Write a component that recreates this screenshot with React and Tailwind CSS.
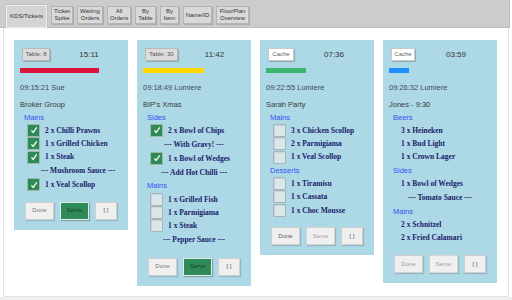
import React from 'react';

const sans = { fontFamily: '"Liberation Sans", Arial, sans-serif' };

const tabs = [
  { label: ['KDS/Tickets'], w: 'w-[41px]', active: true },
  { label: ['Ticket', 'Spike'], w: 'w-[22px]' },
  { label: ['Waiting', 'Orders'], w: 'w-[26px]' },
  { label: ['All', 'Orders'], w: 'w-[24px]' },
  { label: ['By', 'Table'], w: 'w-[21px]' },
  { label: ['By', 'Item'], w: 'w-[19px]' },
  { label: ['Name/ID'], w: 'w-[29px]' },
  { label: ['FloorPlan', 'Overview'], w: 'w-[33px]' },
];

const tickets = [
  {
    tag: 'Table: 8', tagW: 'w-[28px]', tagStyle: 'grey', time: '15:11',
    bar: 'w-[79px] bg-[#dc143c]', stamp: '09:15:21 Sue', name: 'Broker Group',
    lines: [
      { h: 'Mains' },
      { t: '2 x Chilli Prawns', c: true },
      { t: '1 x Grilled Chicken', c: true },
      { t: '1 x Steak', c: true },
      { d: 'Mushroom Sauce', shift: true },
      { t: '1 x Veal Scollop', c: true },
    ],
    serve: 'on', done: 'text-[#777]',
  },
  {
    tag: 'Table: 30', tagW: 'w-[33px]', tagStyle: 'grey', time: '11:42',
    bar: 'w-[61px] bg-[#ffd700]', stamp: '09:18:49 Lumiere', name: "BIP's Xmas",
    lines: [
      { h: 'Sides' },
      { t: '2 x Bowl of Chips', c: true },
      { d: 'With Gravy!' },
      { t: '1 x Bowl of Wedges', c: true },
      { d: 'Add Hot Chilli' },
      { h: 'Mains' },
      { t: '1 x Grilled Fish', c: false },
      { t: '1 x Parmigiama', c: false },
      { t: '1 x Steak', c: false },
      { d: 'Pepper Sauce' },
    ],
    serve: 'on', done: 'text-[#777]',
  },
  {
    tag: 'Cache', tagW: 'w-[26px]', tagStyle: 'white', time: '07:36',
    bar: 'w-[40px] bg-[#3cb371]', stamp: '09:22:55 Lumiere', name: 'Sarah Party',
    lines: [
      { h: 'Mains' },
      { t: '3 x Chicken Scollop', c: false },
      { t: '2 x Parmigiama', c: false },
      { t: '1 x Veal Scollop', c: false },
      { h: 'Desserts' },
      { t: '1 x Tiramisu', c: false },
      { t: '1 x Cassata', c: false },
      { t: '1 x Choc Mousse', c: false },
    ],
    serve: 'off', done: 'text-[#555]',
  },
  {
    tag: 'Cache', tagW: 'w-[24px]', tagStyle: 'white', time: '03:59',
    bar: 'w-[20px] bg-[#1e90ff]', stamp: '09:26:32 Lumiere', name: 'Jones - 9:30',
    lines: [
      { h: 'Beers' },
      { t: '3 x Heineken' },
      { t: '1 x Bud Light' },
      { t: '1 x Crown Lager' },
      { h: 'Sides' },
      { t: '1 x Bowl of Wedges' },
      { d: 'Tomato Sauce' },
      { h: 'Mains' },
      { t: '2 x Schnitzel' },
      { t: '2 x Fried Calamari' },
    ],
    serve: 'off', done: 'text-[#999]',
  },
];

function Check({ on }) {
  if (on) {
    return (
      <span className="w-[13px] h-[13px] shrink-0 rounded-[1px] bg-[#2e8b57] border border-[#9fb8a8] flex items-center justify-center">
        <svg width="8" height="8" viewBox="0 0 10 10">
          <path d="M1.8 5.4 L4 8 L8.4 1.8" fill="none" stroke="#ffffff" strokeWidth="1.5" />
        </svg>
      </span>
    );
  }
  return (
    <span className="w-[13px] h-[13px] shrink-0 rounded-[1px] bg-[#d9e6ea] border border-[#a9b4b8] shadow-[inset_1px_1px_1px_rgba(0,0,0,0.08)]" />
  );
}

function Line({ l }) {
  const serif = { fontFamily: '"Liberation Serif", "Times New Roman", serif' };
  if (l.h) {
    return (
      <div className="h-[13.3px] pl-[10px] flex items-center text-[7.5px] text-[#3b50f5]" style={sans}>
        {l.h}
      </div>
    );
  }
  if (l.d) {
    return (
      <div
        className={`h-[14.5px] flex items-center justify-center text-[7.5px] font-bold text-[#1b1b6b] ${l.shift ? 'pl-[14px]' : ''}`}
        style={serif}
      >
        --- {l.d} ---
      </div>
    );
  }
  return (
    <div className="h-[13.3px] flex items-center pl-[13px] gap-[5px] text-[7.5px] font-bold text-[#1b1b6b]" style={serif}>
      {l.c !== undefined ? <Check on={l.c} /> : <span className="w-[0px]" />}
      <span>{l.t}</span>
    </div>
  );
}

function Ticket({ t }) {
  const tagCls =
    t.tagStyle === 'grey'
      ? 'bg-[#dcdcdc] border-[#b8b8b8] text-[#555]'
      : 'bg-[#ffffff] border-[#c8c8c8] text-[#666]';
  return (
    <div className="w-[114px] shrink-0 bg-[#add8e6] pt-[8px] pb-[10px]" style={sans}>
      <div className="flex items-center h-[13px] pl-[8px]">
        <div className={`${t.tagW} h-[13px] border rounded-[1px] shadow-[1px_1px_1px_rgba(0,0,0,0.2)] flex items-center justify-center text-[6px] ${tagCls}`}>
          {t.tag}
        </div>
        <div className="flex-1 text-center text-[8px] text-[#333]">{t.time}</div>
      </div>
      <div className={`ml-[6px] mt-[7px] h-[5px] ${t.bar}`} />
      <div className="mt-[10px] h-[10px] pl-[6px] flex items-center text-[7.5px] text-[#3d4a6e]">{t.stamp}</div>
      <div className="mt-[7px] h-[10px] pl-[6px] flex items-center text-[7.5px] text-[#3a3a3a]">{t.name}</div>
      <div className="mt-[0.5px]">
        {t.lines.map((l, i) => (
          <Line key={i} l={l} />
        ))}
      </div>
      <div className="mt-[10.5px] flex justify-center gap-[6px] text-[6px]">
        <div className={`w-[29px] h-[18px] bg-[#efefef] border border-[#d0d0d0] shadow-[1px_1px_1px_rgba(0,0,0,0.15)] flex items-center justify-center ${t.done}`}>
          Done
        </div>
        {t.serve === 'on' ? (
          <div className="w-[29px] h-[18px] bg-[#2e8b57] border border-[#e0eee5] shadow-[1px_1px_1px_rgba(0,0,0,0.25)] flex items-center justify-center text-[#1d3d2a]">
            Serve
          </div>
        ) : (
          <div className="w-[29px] h-[18px] bg-[#f0f0f0] border border-[#d4d4d4] shadow-[1px_1px_1px_rgba(0,0,0,0.15)] flex items-center justify-center text-[#a0a0a0]">
            Serve
          </div>
        )}
        <div className="w-[22px] h-[18px] bg-[#efefef] border border-[#d0d0d0] shadow-[1px_1px_1px_rgba(0,0,0,0.15)] flex items-center justify-center text-[#555]">
          [ ]
        </div>
      </div>
    </div>
  );
}

export default function App() {
  return (
    <div className="w-[512px] h-[300px] bg-[#ffffff] overflow-hidden relative" style={sans}>
      <div className="w-[510px] h-[28px] bg-[#cccccc] border-r border-b border-[#bdbdbd] flex items-start pl-[6px] gap-[4px]">
        {tabs.map((b, i) =>
          b.active ? (
            <div
              key={i}
              className={`${b.w} h-[23px] mt-[5px] bg-[#d4d4d4] border border-[#eeeeee] shadow-[0_0_1px_rgba(0,0,0,0.3)] flex flex-col items-center justify-center text-[6px] leading-[7px] text-[#333]`}
            >
              {b.label.map((s) => <span key={s}>{s}</span>)}
            </div>
          ) : (
            <div
              key={i}
              className={`${b.w} h-[18px] mt-[6px] bg-[#d9d9d9] border border-[#b4b4b4] shadow-[1px_1px_1px_rgba(0,0,0,0.15)] flex flex-col items-center justify-center text-[6px] leading-[7px] text-[#333]`}
            >
              {b.label.map((s) => <span key={s}>{s}</span>)}
            </div>
          )
        )}
      </div>
      <div className="ml-[3px] w-[506px] h-[269px] border-l border-r border-b border-[#e2e2e2] flex items-start gap-[9px] pl-[10px] pt-[12px]">
        {tickets.map((t, i) => (
          <Ticket key={i} t={t} />
        ))}
      </div>
      <div className="h-[3px] bg-[#efefef]" />
    </div>
  );
}
